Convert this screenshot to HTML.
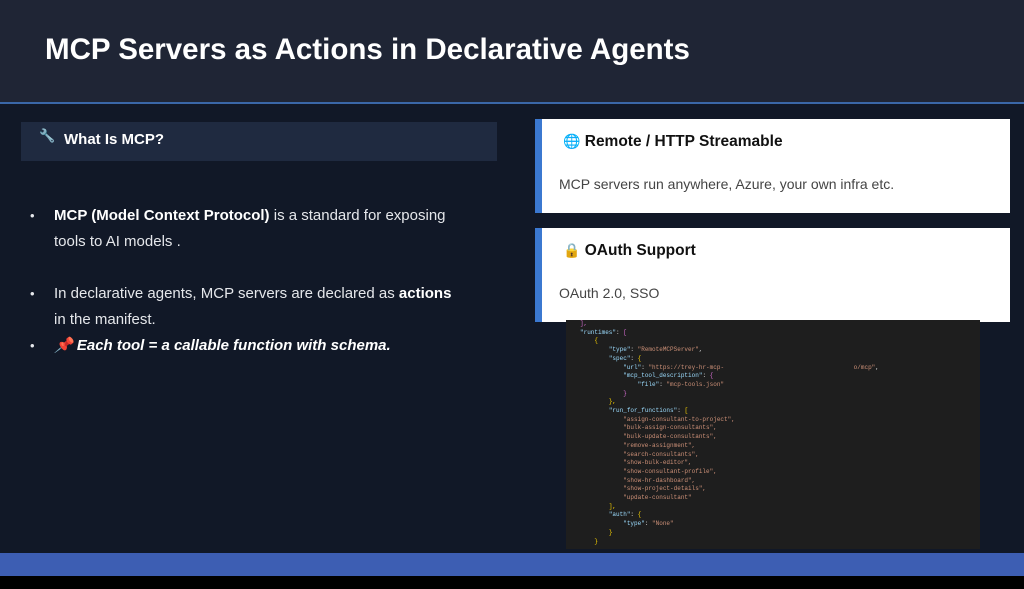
<!DOCTYPE html>
<html><head><meta charset="utf-8"><style>
*{margin:0;padding:0;box-sizing:border-box}
body{width:1024px;height:589px;background:#111827;font-family:"Liberation Sans",sans-serif;position:relative;overflow:hidden;color:#e5e7eb}
.hdr{position:absolute;left:0;top:0;width:1024px;height:104px;background:#1f2535;border-bottom:2px solid #3a67a8}
.hdr h1{position:absolute;left:45px;top:33px;font-size:29.5px;color:#fff;font-weight:bold}
.box{position:absolute;left:21px;top:122px;width:476px;height:39px;background:#1f2a40;color:#fff;font-weight:bold;font-size:15px;padding:9px 0 0 43px}
.box .ic{position:absolute;left:18px;top:6px;font-size:13px;color:#9aa}
ul{position:absolute;left:30px;top:203px;list-style:none;font-size:15px;line-height:26px;color:#e5e7eb;width:428px}
li{position:relative;padding-left:24px}
li:before{content:"•";position:absolute;left:0;font-size:13px}
.card{position:absolute;left:535px;width:475px;background:#fff;border-left:7px solid #3b78d0;color:#1f2937}
.card h3{position:absolute;left:21px;top:14px;font-size:15.5px;font-weight:bold;color:#111}
.card p{position:absolute;left:17px;font-size:14px;color:#444}
.code{position:absolute;left:566px;top:320px;width:414px;height:229px;background:#1e1e1e;font-family:"Liberation Mono",monospace;font-size:6px;line-height:8.7px;color:#ce9178;padding:0 0 0 14px;white-space:pre}
.k{color:#9cdcfe}.p{color:#d4d4d4}.b{color:#ffd700}.m{color:#da70d6}
.bar{position:absolute;left:0;top:553px;width:1024px;height:23px;background:#3d5eb3}
.blk{position:absolute;left:0;top:576px;width:1024px;height:13px;background:#000}
</style></head><body>
<div class="hdr"><h1>MCP Servers as Actions in Declarative Agents</h1></div>
<div class="box"><span class="ic">🔧</span>What Is MCP?</div>
<ul>
<li><b style="color:#fff">MCP (Model Context Protocol)</b> is a standard for exposing tools to AI models .</li>
<li style="margin-top:26px">In declarative agents, MCP servers are declared as <b style="color:#fff">actions</b> in the manifest.</li>
<li><b><i style="color:#fff">📌 Each tool = a callable function with schema.</i></b></li>
</ul>
<div class="card" style="top:119px;height:94px"><h3><span style="font-size:14px;color:#3b82f6">🌐</span> Remote / HTTP Streamable</h3><p style="top:57px">MCP servers run anywhere, Azure, your own infra etc.</p></div>
<div class="card" style="top:228px;height:94px"><h3><span style="font-size:14px">🔒</span> OAuth Support</h3><p style="top:57px">OAuth 2.0, SSO</p></div>
<div class="code"><span class="m">],</span>
<span class="k">"runtimes"</span><span class="p">: </span><span class="m">[</span>
    <span class="b">{</span>
        <span class="k">"type"</span><span class="p">: </span>"RemoteMCPServer"<span class="p">,</span>
        <span class="k">"spec"</span><span class="p">: </span><span class="b">{</span>
            <span class="k">"url"</span><span class="p">: </span>"https://trey-hr-mcp-                                    o/mcp"<span class="p">,</span>
            <span class="k">"mcp_tool_description"</span><span class="p">: </span><span class="m">{</span>
                <span class="k">"file"</span><span class="p">: </span>"mcp-tools.json"
            <span class="m">}</span>
        <span class="b">},</span>
        <span class="k">"run_for_functions"</span><span class="p">: </span><span class="b">[</span>
            "assign-consultant-to-project",
            "bulk-assign-consultants",
            "bulk-update-consultants",
            "remove-assignment",
            "search-consultants",
            "show-bulk-editor",
            "show-consultant-profile",
            "show-hr-dashboard",
            "show-project-details",
            "update-consultant"
        <span class="b">],</span>
        <span class="k">"auth"</span><span class="p">: </span><span class="b">{</span>
            <span class="k">"type"</span><span class="p">: </span>"None"
        <span class="b">}</span>
    <span class="b">}</span></div>
<div class="bar"></div><div class="blk"></div>
</body></html>
